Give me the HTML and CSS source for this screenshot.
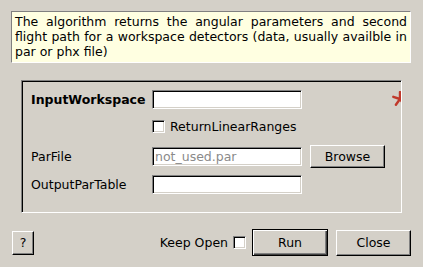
FILE: index.html
```html
<!DOCTYPE html>
<html lang="en">
<head>
    <meta charset="UTF-8">
    <title>LoadDetectorInfo</title>
    <link rel="stylesheet" href="styles.css">
</head>
<body>
    <div class="dialog">
        <p class="description">The algorithm returns the angular parameters and second flight path for a workspace detectors (data, usually availble in par or phx file)</p>

        <div class="group">
            <div class="prop-grid">
                <div class="row">
                    <label class="prop-label bold">InputWorkspace</label>
                    <input class="field" type="text">
                    <span class="spacer"></span>
                    <svg class="required" width="16" height="16" viewBox="0 0 16 16">
                        <g stroke="#c0392b" stroke-width="2.4" stroke-linecap="round">
                            <line x1="9" y1="8" x2="9" y2="1"/>
                            <line x1="9" y1="8" x2="15.7" y2="5.8"/>
                            <line x1="9" y1="8" x2="13.1" y2="13.7"/>
                            <line x1="9" y1="8" x2="4.9" y2="13.7"/>
                            <line x1="9" y1="8" x2="2.3" y2="5.8"/>
                        </g>
                    </svg>
                </div>
                <div class="row tall">
                    <span class="prop-label"></span>
                    <label class="check-label"><span class="checkbox"></span>ReturnLinearRanges</label>
                </div>
                <div class="row taller">
                    <label class="prop-label">ParFile</label>
                    <input class="field" type="text" placeholder="not_used.par">
                    <button class="btn browse">Browse</button>
                </div>
                <div class="row">
                    <label class="prop-label">OutputParTable</label>
                    <input class="field" type="text">
                </div>
            </div>
        </div>

        <div class="footer">
            <button class="btn help">?</button>
            <span class="keep-open">Keep Open</span>
            <span class="checkbox"></span>
            <button class="btn run">Run</button>
            <button class="btn close">Close</button>
        </div>
    </div>
</body>
</html>
```

FILE: styles.css
```css
* {
    margin: 0;
    padding: 0;
    box-sizing: border-box;
}

body {
    background: #d4d0c8;
    font-family: "DejaVu Sans", sans-serif;
    font-size: 12.5px;
    color: #000;
}

.dialog {
    padding: 11px 12px 0 11px;
}

/* Description box */
.description {
    height: 52px;
    padding: 2px 3px 0 3px;
    line-height: 15px;
    text-align: justify;
    background: #ffffe1;
    border: 1px solid;
    border-color: #808080 #ffffff #ffffff #808080;
}

/* Property group */
.group {
    width: 381px;
    height: 133px;
    margin: 17px 0 0 10px;
    padding: 6px 0 0 9px;
    border: 1px solid;
    border-color: #808080 #ffffff #ffffff #808080;
    box-shadow: inset 1px 1px #000;
    overflow: hidden;
}

.row {
    display: flex;
    align-items: center;
    height: 25px;
}

.row > * {
    flex-shrink: 0;
}

.row.tall {
    height: 28px;
}

.row.taller {
    height: 32px;
}

.prop-label {
    width: 121px;
}

.bold {
    font-weight: bold;
}

.field {
    width: 150px;
    height: 19px;
    padding: 0 2px;
    font-family: inherit;
    font-size: 12.5px;
    background: #fff;
    border: 1px solid;
    border-color: #808080 #ffffff #ffffff #808080;
    box-shadow: inset 1px 1px #000, inset -1px -1px #d4d0c8;
    outline: none;
}

.field::placeholder {
    color: #8a8a8a;
}

.spacer {
    width: 89px;
}

.required {
    display: block;
    margin-top: -2px;
}

.checkbox {
    display: inline-block;
    width: 13px;
    height: 13px;
    background: #fff;
    border: 1px solid;
    border-color: #808080 #ffffff #ffffff #808080;
    box-shadow: inset 1px 1px #000, inset -1px -1px #d4d0c8;
}

.check-label {
    display: flex;
    align-items: center;
    gap: 5px;
}

/* Buttons */
.btn {
    font-family: inherit;
    font-size: 12.5px;
    color: #000;
    background: #d4d0c8;
    border: 1px solid;
    border-color: #ffffff #000 #000 #ffffff;
    box-shadow: inset -1px -1px #808080;
}

.browse {
    width: 75px;
    height: 23px;
    margin-left: 8px;
}

.footer {
    display: flex;
    align-items: center;
    height: 27px;
    margin-top: 16px;
    padding-left: 1px;
}

.help {
    width: 22px;
    height: 24px;
}

.keep-open {
    margin-left: auto;
    margin-right: 5px;
}

.run {
    width: 76px;
    height: 27px;
    margin-left: 6px;
    border: 1px solid #000;
    box-shadow: inset 1px 1px #fff, inset -1px -1px #404040, inset -2px -2px #808080;
}

.close {
    width: 75px;
    height: 26px;
    margin-left: 8px;
}
```
